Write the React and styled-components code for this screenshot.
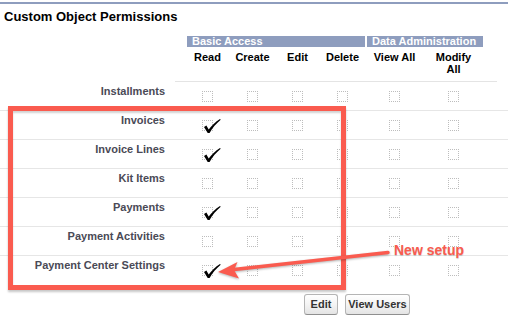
import React from "react";
import styled, { createGlobalStyle } from "styled-components";

const GlobalStyle = createGlobalStyle`
  html, body { margin: 0; padding: 0; background: #fff; }
  body { font-family: "Liberation Sans", Arial, Helvetica, sans-serif; }
`;

const RED = "#fa5b4f";
const BAR = "#8e9dbe";

const Page = styled.div`
  position: relative;
  width: 508px;
  height: 325px;
  overflow: hidden;
  padding-top: 2px;
  box-sizing: border-box;
`;

const Block = styled.section`
  border-top: 2px solid ${BAR};
`;

const Title = styled.h2`
  margin: 0;
  padding: 5px 0 0 4px;
  font-size: 13px;
  line-height: 15px;
  font-weight: bold;
  color: #000;
`;

const GroupRow = styled.div`
  display: flex;
  gap: 2px;
  margin-top: 12px;
  padding-left: 187px;
`;

const GroupBar = styled.div`
  width: ${(p) => p.$w}px;
  height: 11px;
  box-sizing: border-box;
  padding-left: 5px;
  background: ${BAR};
  color: #fff;
  font-size: 11px;
  line-height: 11px;
  font-weight: bold;
  white-space: nowrap;
  overflow: hidden;
`;

const HeaderRow = styled.div`
  display: flex;
  margin-left: 175px;
  width: 312px;
  height: 34px;
  padding-left: 10px;
  box-sizing: content-box;
  border-bottom: 1px solid #e4e4e4;
`;

const HeaderCell = styled.div`
  width: ${(p) => p.$w}px;
  flex: none;
  padding-top: 4px;
  text-align: center;
  font-size: 11px;
  line-height: 12px;
  font-weight: bold;
  color: #000;
`;

const Row = styled.div`
  display: flex;
  height: 28px;
  border-bottom: ${(p) => (p.$last ? "none" : "1px solid #e6e6e6")};
`;

const Label = styled.div`
  width: 175px;
  flex: none;
  box-sizing: border-box;
  padding: 3px 10px 0 0;
  text-align: right;
  font-size: 11px;
  line-height: 13px;
  font-weight: bold;
  color: #4a4a56;
  white-space: nowrap;
`;

const Cells = styled.div`
  display: flex;
  padding-left: 10px;
`;

const CheckCell = styled.div`
  width: ${(p) => p.$w}px;
  flex: none;
  display: flex;
  justify-content: center;
  padding-top: 9px;
`;

const Box = styled.span`
  position: relative;
  display: block;
  width: 11px;
  height: 11px;
  box-sizing: border-box;
  border: 1px dotted #bdbdbd;
`;

const Tick = styled.svg`
  position: absolute;
  left: -1px;
  top: -3px;
  overflow: visible;
`;

const Buttons = styled.div`
  display: flex;
  gap: 7px;
  margin-top: 10px;
  padding-left: 304px;
`;

const Button = styled.button`
  width: ${(p) => p.$w}px;
  height: 21px;
  padding: 0;
  box-sizing: border-box;
  border: 1px solid #b5b5b5;
  border-bottom-color: #8f8f8f;
  border-radius: 3px;
  background: linear-gradient(#ffffff, #f4f4f4 50%, #e4e4e4);
  color: #333;
  font-family: inherit;
  font-size: 11px;
  font-weight: bold;
  line-height: 19px;
`;

const Highlight = styled.div`
  position: absolute;
  left: 8px;
  top: 106px;
  width: 338px;
  height: 184px;
  box-sizing: border-box;
  border: 5px solid ${RED};
  box-shadow: 0 2px 2px rgba(0, 0, 0, 0.22), inset 0 2px 2px rgba(0, 0, 0, 0.18);
  pointer-events: none;
`;

const Arrow = styled.svg`
  position: absolute;
  left: 0;
  top: 0;
  pointer-events: none;
  filter: drop-shadow(0 1.5px 1px rgba(0, 0, 0, 0.3));
`;

const Note = styled.div`
  position: absolute;
  left: 394px;
  top: 242px;
  font-size: 14px;
  line-height: 16px;
  font-weight: bold;
  color: ${RED};
  white-space: nowrap;
  text-shadow: 0 1px 1px rgba(0, 0, 0, 0.2);
`;

const COLS = [
  { label: "Read", w: 45 },
  { label: "Create", w: 45 },
  { label: "Edit", w: 45 },
  { label: "Delete", w: 45 },
  { label: "View All", w: 59 },
  { label: "Modify All", w: 59 },
];

const ROWS = [
  { name: "Installments", read: false },
  { name: "Invoices", read: true },
  { name: "Invoice Lines", read: true },
  { name: "Kit Items", read: false },
  { name: "Payments", read: true },
  { name: "Payment Activities", read: false },
  { name: "Payment Center Settings", read: true },
];

function CheckMark() {
  return (
    <Tick width="20" height="16" viewBox="0 -2 20 16">
      <path
        d="M2 7 L4.4 5.6 L6.7 9.6 C9.5 5.8 13.4 1.8 18 -1 L18.7 -0.2 C14.3 3.4 10.4 8 7.6 13 L5.7 13 Z"
        fill="#000"
      />
    </Tick>
  );
}

export default function App() {
  return (
    <>
      <GlobalStyle />
      <Page>
        <Block>
          <Title>Custom Object Permissions</Title>
          <GroupRow>
            <GroupBar $w={178}>Basic Access</GroupBar>
            <GroupBar $w={116}>Data Administration</GroupBar>
          </GroupRow>
          <HeaderRow>
            {COLS.map((c) => (
              <HeaderCell key={c.label} $w={c.w}>
                {c.label === "Modify All" ? (
                  <>
                    Modify
                    <br />
                    All
                  </>
                ) : (
                  c.label
                )}
              </HeaderCell>
            ))}
          </HeaderRow>
          {ROWS.map((r, i) => (
            <Row key={r.name} $last={i === ROWS.length - 1}>
              <Label>{r.name}</Label>
              <Cells>
                {COLS.map((c, j) => (
                  <CheckCell key={c.label} $w={c.w}>
                    <Box>{j === 0 && r.read ? <CheckMark /> : null}</Box>
                  </CheckCell>
                ))}
              </Cells>
            </Row>
          ))}
          <Buttons>
            <Button $w={34}>Edit</Button>
            <Button $w={65}>View Users</Button>
          </Buttons>
        </Block>
        <Highlight />
        <Arrow width="508" height="325" viewBox="0 0 508 325">
          <line x1="388" y1="252.5" x2="234" y2="269.5" stroke={RED} strokeWidth="3.5" strokeLinecap="round" />
          <polygon points="218,272 237.5,262 234,270 239,278.5" fill={RED} />
        </Arrow>
        <Note>New setup</Note>
      </Page>
    </>
  );
}
